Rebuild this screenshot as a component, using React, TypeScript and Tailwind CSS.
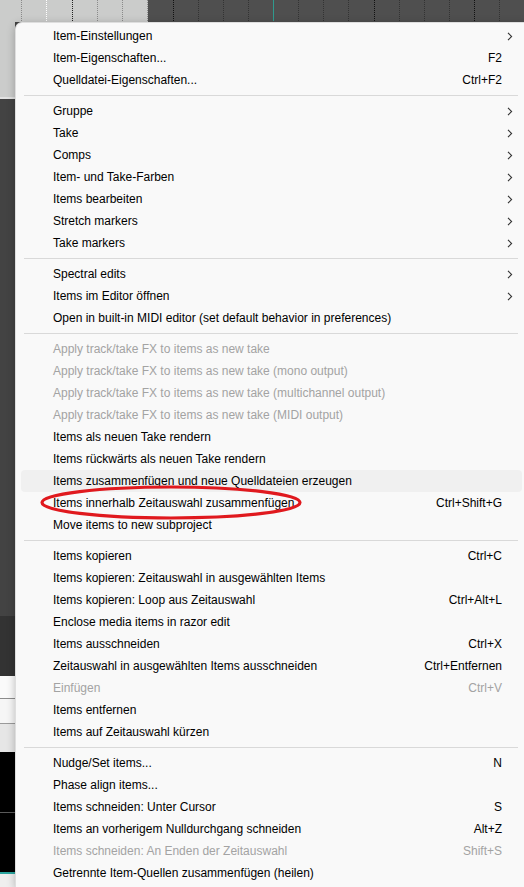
import { Fragment } from "react";

type Entry = {
  label: string;
  shortcut?: string;
  sub?: boolean;
  disabled?: boolean;
  hover?: boolean;
};

const sections: Entry[][] = [
  [
    { label: "Item-Einstellungen", sub: true },
    { label: "Item-Eigenschaften...", shortcut: "F2" },
    { label: "Quelldatei-Eigenschaften...", shortcut: "Ctrl+F2" },
  ],
  [
    { label: "Gruppe", sub: true },
    { label: "Take", sub: true },
    { label: "Comps", sub: true },
    { label: "Item- und Take-Farben", sub: true },
    { label: "Items bearbeiten", sub: true },
    { label: "Stretch markers", sub: true },
    { label: "Take markers", sub: true },
  ],
  [
    { label: "Spectral edits", sub: true },
    { label: "Items im Editor öffnen", sub: true },
    { label: "Open in built-in MIDI editor (set default behavior in preferences)" },
  ],
  [
    { label: "Apply track/take FX to items as new take", disabled: true },
    { label: "Apply track/take FX to items as new take (mono output)", disabled: true },
    { label: "Apply track/take FX to items as new take (multichannel output)", disabled: true },
    { label: "Apply track/take FX to items as new take (MIDI output)", disabled: true },
    { label: "Items als neuen Take rendern" },
    { label: "Items rückwärts als neuen Take rendern" },
    { label: "Items zusammenfügen und neue Quelldateien erzeugen", hover: true },
    { label: "Items innerhalb Zeitauswahl zusammenfügen", shortcut: "Ctrl+Shift+G" },
    { label: "Move items to new subproject" },
  ],
  [
    { label: "Items kopieren", shortcut: "Ctrl+C" },
    { label: "Items kopieren: Zeitauswahl in ausgewählten Items" },
    { label: "Items kopieren: Loop aus Zeitauswahl", shortcut: "Ctrl+Alt+L" },
    { label: "Enclose media items in razor edit" },
    { label: "Items ausschneiden", shortcut: "Ctrl+X" },
    { label: "Zeitauswahl in ausgewählten Items ausschneiden", shortcut: "Ctrl+Entfernen" },
    { label: "Einfügen", shortcut: "Ctrl+V", disabled: true },
    { label: "Items entfernen" },
    { label: "Items auf Zeitauswahl kürzen" },
  ],
  [
    { label: "Nudge/Set items...", shortcut: "N" },
    { label: "Phase align items..." },
    { label: "Items schneiden: Unter Cursor", shortcut: "S" },
    { label: "Items an vorherigem Nulldurchgang schneiden", shortcut: "Alt+Z" },
    { label: "Items schneiden: An Enden der Zeitauswahl", shortcut: "Shift+S", disabled: true },
    { label: "Getrennte Item-Quellen zusammenfügen (heilen)" },
  ],
];

// ruler ticks in the arrange view behind the menu
const ticks = [
  { w: 22, c: "border-[#8a8a8a]" },
  { w: 25, c: "border-white" },
  { w: 26, c: "border-[#222]" },
  { w: 25, c: "border-[#8a8a8a]" },
  { w: 25, c: "border-[#8a8a8a]" },
  { w: 25, c: "border-[#8a8a8a]" },
  { w: 26, c: "border-[#111]" },
  { w: 25, c: "border-[#333]" },
  { w: 25, c: "border-[#333]" },
  { w: 25, c: "border-[#333]" },
  { w: 25, c: "border-[#2f9a8e] border-solid" },
  { w: 25, c: "border-[#333]" },
  { w: 25, c: "border-[#333]" },
  { w: 25, c: "border-[#333]" },
  { w: 26, c: "border-[#111]" },
  { w: 25, c: "border-[#333]" },
  { w: 25, c: "border-[#333]" },
  { w: 25, c: "border-[#333]" },
  { w: 25, c: "border-[#111]" },
  { w: 25, c: "border-[#333]" },
];

function Chevron() {
  return (
    <svg width="6" height="9" viewBox="0 0 6 9" fill="none" stroke="#333" strokeWidth="1.1">
      <path d="M1 0.8 L4.6 4.5 L1 8.2" />
    </svg>
  );
}

function MenuRow({ item }: { item: Entry }) {
  const tone = item.disabled ? "text-[#a3a3a3]" : "text-black";
  return (
    <div
      className={`flex items-center h-[22px] rounded-[4px] ${item.hover ? "bg-[#f0f0f0]" : ""} ${tone}`}
    >
      <span className="flex-1 pl-[32px] whitespace-nowrap">{item.label}</span>
      {item.shortcut && <span className="whitespace-nowrap">{item.shortcut}</span>}
      <span className="w-[20px] pl-[5px] flex items-center">{item.sub && <Chevron />}</span>
    </div>
  );
}

function LeftStrip() {
  return (
    <div className="w-[15px] shrink-0 flex flex-col">
      <div className="h-[75px] bg-[#cbcccb]" />
      <div className="h-[2px] bg-[#e2e2e2]" />
      <div className="h-[517px] bg-[#434343]" />
      <div className="h-[60px] bg-[#333333]" />
      <div className="h-[22px] bg-[#fafafa]" />
      <div className="h-px bg-[#8c8c8c]" />
      <div className="h-[25px] bg-[#f6f6f6] border-b border-[#9a9a9a]" />
      <div className="h-[28px] bg-[#e6e6e6]" />
      <div className="h-[60px] bg-black" />
      <div className="h-px bg-[#5a5a5a]" />
      <div className="h-[59px] bg-black" />
      <div className="h-[2px] bg-[#2ba6a0]" />
      <div className="flex-1 bg-[#efefef]" />
    </div>
  );
}

export default function App() {
  return (
    <div
      className="relative w-[524px] h-[887px] overflow-hidden bg-[#434343] text-[12px]"
      style={{ fontFamily: '"Liberation Sans", Arial, sans-serif' }}
    >
      <div className="flex h-[22px]">
        <div className="flex w-[148px] h-full bg-[#cbcccb] shrink-0">
          {ticks.slice(0, 6).map((t, i) => (
            <div key={i} className={`h-[21px] border-r border-dotted ${t.c}`} style={{ width: t.w }} />
          ))}
        </div>
        <div className="flex flex-1 h-full bg-[#4f4f4f]">
          {ticks.slice(6).map((t, i) => (
            <div key={i} className={`h-[21px] border-r border-dotted ${t.c}`} style={{ width: t.w }} />
          ))}
        </div>
      </div>

      <div className="flex h-[865px]">
        <LeftStrip />
        <div className="w-[512px] shrink-0 bg-[#f9f9f9] border-l border-t border-[#dedede] rounded-tl-[7px] pt-[2px] px-[5px] shadow-[0_2px_8px_rgba(0,0,0,0.25)]">
          {sections.map((sec, si) => (
            <Fragment key={si}>
              {si > 0 && (
                <div className="h-[9px] flex items-center pl-[3px] pr-[4px]">
                  <div className="h-px w-full bg-[#d9d9d9]" />
                </div>
              )}
              {sec.map((item) => (
                <MenuRow key={item.label} item={item} />
              ))}
            </Fragment>
          ))}
        </div>
      </div>

      <svg className="absolute left-[40px] top-[485px] pointer-events-none" width="264" height="36" viewBox="0 0 264 36">
        <ellipse cx="131" cy="17.5" rx="129" ry="15.5" fill="none" stroke="#e0191e" strokeWidth="3.2" />
      </svg>
    </div>
  );
}
